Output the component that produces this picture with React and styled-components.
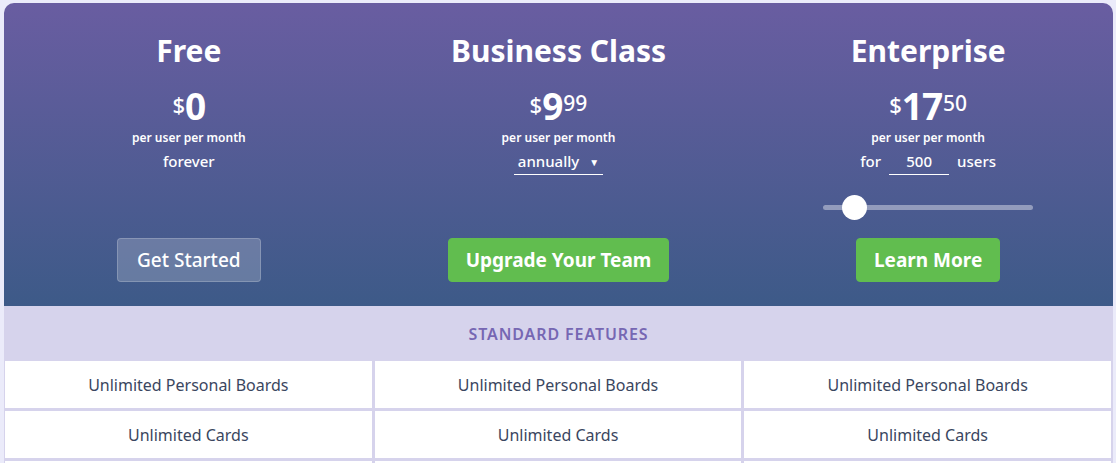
import React from "react";
import styled, { createGlobalStyle } from "styled-components";

const GlobalStyle = createGlobalStyle`
  body {
    margin: 0;
    background: #ebebfa;
    font-family: "Noto Sans", "Open Sans", sans-serif;
  }
`;

const Page = styled.div`
  padding: 3px 3px 0 4px;
`;

const Card = styled.div`
  border-radius: 10px 10px 0 0;
  overflow: hidden;
`;

const Header = styled.div`
  display: grid;
  grid-template-columns: repeat(3, 1fr);
  height: 303px;
  background: linear-gradient(180deg, #695da1 0%, #3d5a88 100%);
  color: #fff;
`;

const Plan = styled.div`
  display: flex;
  flex-direction: column;
  align-items: center;
  padding-top: 29px;
`;

const PlanName = styled.h2`
  margin: 0;
  font-size: 30px;
  font-weight: 700;
  line-height: 38px;
`;

const Price = styled.div`
  display: flex;
  align-items: flex-start;
  margin-top: 17px;
  line-height: 1;
`;

const Currency = styled.span`
  font-size: 22px;
  font-weight: 500;
  margin-top: 6px;
`;

const Amount = styled.span`
  font-size: 37px;
  font-weight: 700;
  letter-spacing: -1px;
`;

const Cents = styled.span`
  font-size: 21px;
  font-weight: 500;
  margin-top: 6px;
  margin-left: 1px;
`;

const PerUser = styled.div`
  margin-top: 5px;
  font-size: 12px;
  font-weight: 600;
  line-height: 18px;
`;

const Extra = styled.div`
  display: flex;
  align-items: center;
  gap: 8px;
  height: 28px;
  font-size: 15px;
  font-weight: 500;
`;

const Dropdown = styled.div`
  display: flex;
  align-items: center;
  gap: 10px;
  padding: 0 4px;
  height: 26px;
  border-bottom: 1px solid #fff;
  cursor: pointer;
`;

const Caret = styled.span`
  font-size: 10px;
  margin-top: 3px;
`;

const UsersInput = styled.input`
  width: 60px;
  height: 26px;
  padding: 0;
  border: none;
  border-bottom: 1px solid #fff;
  background: transparent;
  color: #fff;
  font: inherit;
  text-align: center;
  outline: none;
`;

const Slider = styled.input`
  -webkit-appearance: none;
  appearance: none;
  width: 210px;
  height: 5px;
  margin: 30px 0 0;
  border-radius: 3px;
  background: rgba(255, 255, 255, 0.4);
  outline: none;

  &::-webkit-slider-thumb {
    -webkit-appearance: none;
    width: 25px;
    height: 25px;
    border-radius: 50%;
    background: #fff;
    cursor: pointer;
  }
`;

const Spacer = styled.div`
  flex: 1;
`;

const Button = styled.button`
  height: 44px;
  margin-bottom: 24px;
  padding: 0 ${(p) => (p.$ghost ? "19px" : "17px")};
  border-radius: 4px;
  border: 1px solid ${(p) => (p.$ghost ? "rgba(255,255,255,0.2)" : "#61bd4f")};
  background: ${(p) => (p.$ghost ? "rgba(255,255,255,0.2)" : "#61bd4f")};
  color: #fff;
  font-family: inherit;
  font-size: 19px;
  font-weight: ${(p) => (p.$ghost ? 500 : 700)};
  cursor: pointer;
`;

const SectionTitle = styled.div`
  height: 55px;
  display: flex;
  align-items: center;
  justify-content: center;
  background: #d6d3ec;
  color: #7667b3;
  font-size: 16px;
  font-weight: 600;
  letter-spacing: 0.9px;
`;

const FeatureGrid = styled.div`
  display: grid;
  grid-template-columns: repeat(3, 1fr);
  gap: 3px;
  padding: 0 2px 0 1px;
  background: #d6d3ec;
`;

const Cell = styled.div`
  height: 47px;
  display: flex;
  align-items: center;
  justify-content: center;
  background: #fff;
  color: #3a4660;
  font-size: 16px;
`;

const features = [
  "Unlimited Personal Boards",
  "Unlimited Cards",
  "Unlimited Lists",
];

export default function App() {
  return (
    <>
      <GlobalStyle />
      <Page>
        <Card>
          <Header>
            <Plan>
              <PlanName>Free</PlanName>
              <Price>
                <Currency>$</Currency>
                <Amount>0</Amount>
              </Price>
              <PerUser>per user per month</PerUser>
              <Extra>forever</Extra>
              <Spacer />
              <Button $ghost>Get Started</Button>
            </Plan>
            <Plan>
              <PlanName>Business Class</PlanName>
              <Price>
                <Currency>$</Currency>
                <Amount>9</Amount>
                <Cents>99</Cents>
              </Price>
              <PerUser>per user per month</PerUser>
              <Extra>
                <Dropdown>
                  annually <Caret>▼</Caret>
                </Dropdown>
              </Extra>
              <Spacer />
              <Button>Upgrade Your Team</Button>
            </Plan>
            <Plan>
              <PlanName>Enterprise</PlanName>
              <Price>
                <Currency>$</Currency>
                <Amount>17</Amount>
                <Cents>50</Cents>
              </Price>
              <PerUser>per user per month</PerUser>
              <Extra>
                for <UsersInput defaultValue="500" /> users
              </Extra>
              <Slider type="range" min="0" max="100" defaultValue="10" />
              <Spacer />
              <Button>Learn More</Button>
            </Plan>
          </Header>
          <SectionTitle>STANDARD FEATURES</SectionTitle>
          <FeatureGrid>
            {features.map((f) =>
              [0, 1, 2].map((i) => <Cell key={f + i}>{f}</Cell>)
            )}
          </FeatureGrid>
        </Card>
      </Page>
    </>
  );
}
